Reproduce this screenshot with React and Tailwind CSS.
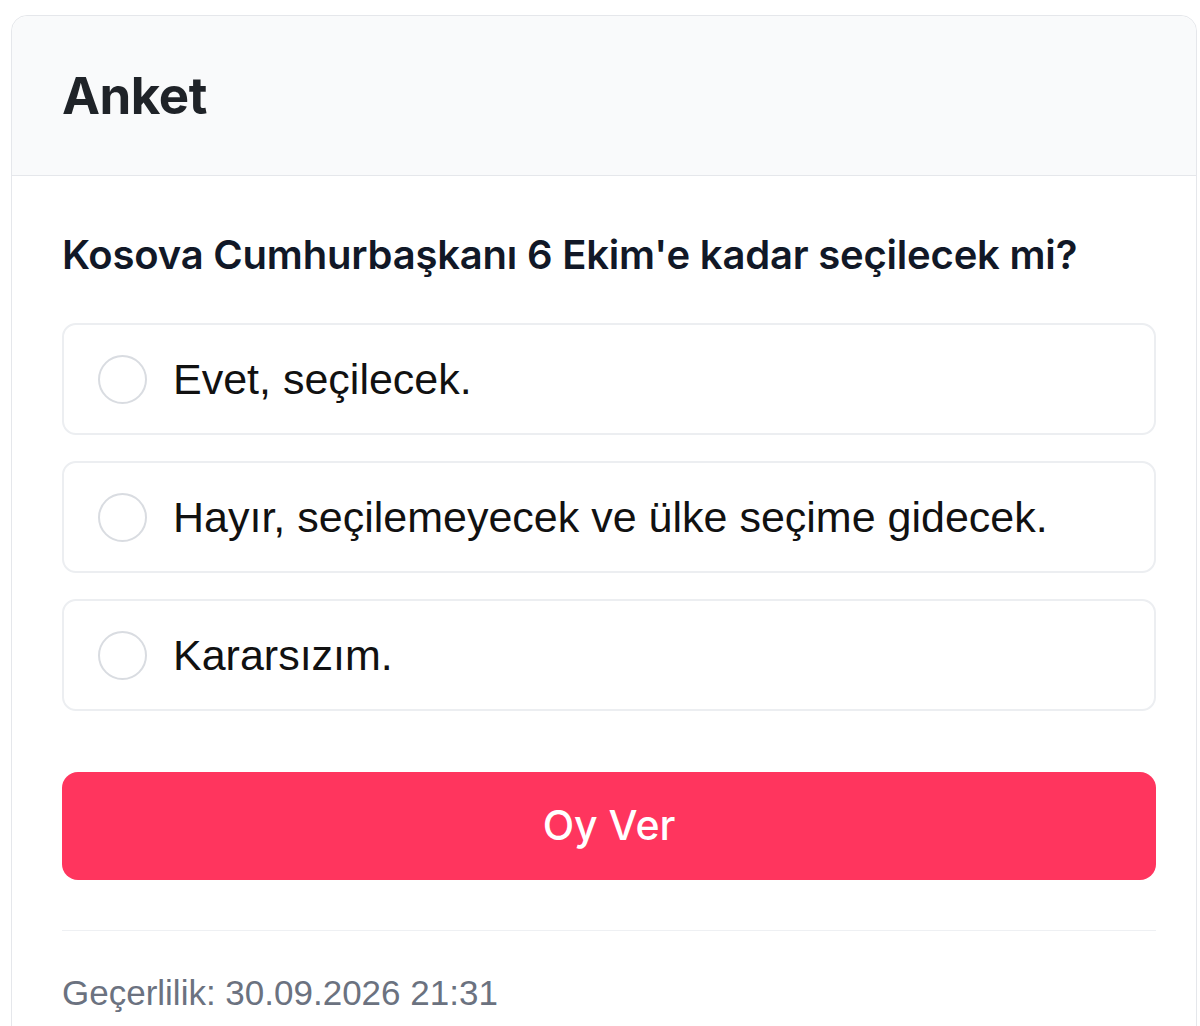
import { useState } from 'react';

const options = [
  'Evet, seçilecek.',
  'Hayır, seçilemeyecek ve ülke seçime gidecek.',
  'Kararsızım.',
];

const PollCard = () => {
  const [selected, setSelected] = useState(null);

  return (
    <div className="ml-[11px] mt-[15px] w-[1186px] rounded-t-[16px] border border-[#e5e7eb] bg-white">
      <div className="flex h-[160px] items-center rounded-t-[16px] border-b border-[#e5e7eb] bg-[#f9fafb] pl-[50px]">
        <h2 className="font-['Inter',sans-serif] text-[51px] font-bold leading-none tracking-[-0.5px] text-[#1f2328]">Anket</h2>
      </div>
      <div className="pl-[50px] pr-[40px] pt-[54px] pb-[30px]">
        <p className="font-['Inter',sans-serif] text-[40px] font-semibold leading-[50px] tracking-[-0.2px] text-[#111827]">
          Kosova Cumhurbaşkanı 6 Ekim'e kadar seçilecek mi?
        </p>
        <div className="mt-[43px] flex flex-col gap-[26px]">
          {options.map((option, i) => (
            <button
              key={option}
              onClick={() => setSelected(i)}
              className="flex h-[112px] w-full items-center gap-[26px] rounded-[14px] border-2 border-[#eceef1] bg-white pl-[34px] text-left"
            >
              <span className={`flex h-[49px] w-[49px] shrink-0 items-center justify-center rounded-full border-2 ${selected === i ? 'border-[#ff355e]' : 'border-[#d9dce1]'}`}>
                {selected === i && <span className="h-[24px] w-[24px] rounded-full bg-[#ff355e]" />}
              </span>
              <span className="font-['Liberation_Sans',sans-serif] text-[43px] leading-none text-[#111111]">{option}</span>
            </button>
          ))}
        </div>
        <button className="mt-[61px] flex h-[108px] w-full items-center justify-center rounded-[16px] bg-[#ff355e] font-['Inter',sans-serif] text-[41px] font-medium text-white">
          Oy Ver
        </button>
        <div className="mt-[50px] h-px bg-[#eef0f3]" />
        <p className="mt-[40px] font-['Liberation_Sans',sans-serif] text-[35px] leading-[44px] text-[#6b7280]">
          Geçerlilik: 30.09.2026 21:31
        </p>
      </div>
    </div>
  );
};

export default function App() {
  return (
    <div className="min-h-screen bg-white">
      <PollCard />
    </div>
  );
}
